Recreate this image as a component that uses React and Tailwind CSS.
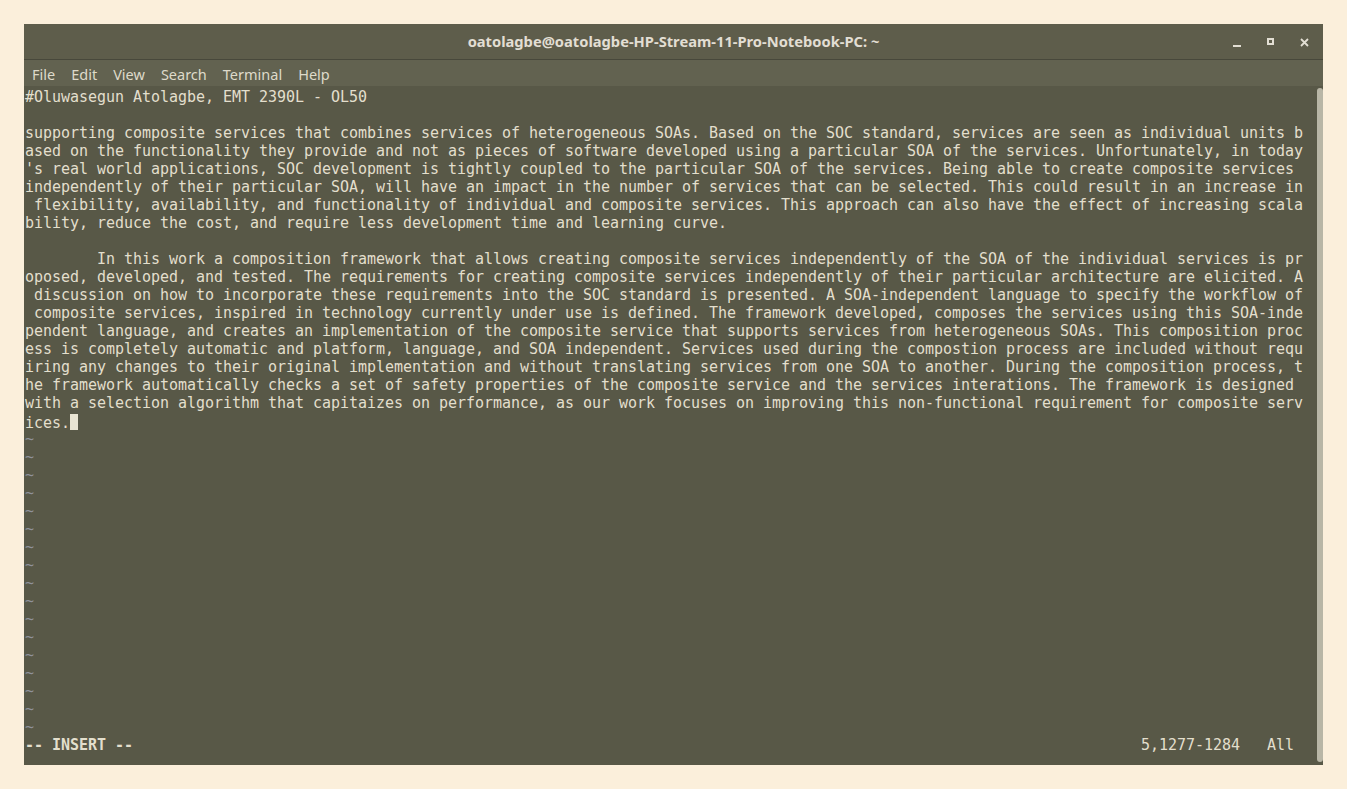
import React from "react";

const para1 = [
  "supporting composite services that combines services of heterogeneous SOAs. Based on the SOC standard, services are seen as individual units b",
  "ased on the functionality they provide and not as pieces of software developed using a particular SOA of the services. Unfortunately, in today",
  "'s real world applications, SOC development is tightly coupled to the particular SOA of the services. Being able to create composite services ",
  "independently of their particular SOA, will have an impact in the number of services that can be selected. This could result in an increase in",
  " flexibility, availability, and functionality of individual and composite services. This approach can also have the effect of increasing scala",
  "bility, reduce the cost, and require less development time and learning curve.",
];

const para2 = [
  "        In this work a composition framework that allows creating composite services independently of the SOA of the individual services is pr",
  "oposed, developed, and tested. The requirements for creating composite services independently of their particular architecture are elicited. A",
  " discussion on how to incorporate these requirements into the SOC standard is presented. A SOA-independent language to specify the workflow of",
  " composite services, inspired in technology currently under use is defined. The framework developed, composes the services using this SOA-inde",
  "pendent language, and creates an implementation of the composite service that supports services from heterogeneous SOAs. This composition proc",
  "ess is completely automatic and platform, language, and SOA independent. Services used during the compostion process are included without requ",
  "iring any changes to their original implementation and without translating services from one SOA to another. During the composition process, t",
  "he framework automatically checks a set of safety properties of the composite service and the services interations. The framework is designed ",
  "with a selection algorithm that capitaizes on performance, as our work focuses on improving this non-functional requirement for composite serv",
];

const tildes = Array.from({ length: 17 });

function Row({ children, className = "" }) {
  return <div className={`h-[18px] leading-[18px] whitespace-pre ${className}`}>{children}</div>;
}

export default function App() {
  return (
    <div className="min-h-screen w-full bg-[#fbefdb] pt-[24px] pl-[24px]">
      <div className="flex h-[741px] w-[1299px] flex-col bg-[#585847]">
        {/* title bar */}
        <div className="relative flex h-[36px] items-center justify-center border-b border-[#48483b] bg-[#5e5d4b]">
          <span className="font-['Noto_Sans',sans-serif] text-[14.7px] font-bold text-[#e2ded3]">
            oatolagbe@oatolagbe-HP-Stream-11-Pro-Notebook-PC: ~
          </span>
          <div className="absolute right-[14px] top-0 flex h-full items-center gap-[26px]">
            <div className="mt-[8px] h-[2px] w-[8px] bg-[#e2ded3]" />
            <div className="flex h-[7px] w-[7px] items-center justify-center bg-[#e2ded3]">
              <div className="h-[3px] w-[3px] bg-[#5e5d4b]" />
            </div>
            <svg width="9" height="9" viewBox="0 0 9 9" className="mt-[1px]">
              <path d="M1 1L8 8M8 1L1 8" stroke="#e2ded3" strokeWidth="1.8" />
            </svg>
          </div>
        </div>

        {/* menu bar */}
        <div className="flex h-[26px] items-center gap-[16px] bg-[#626250] pl-[8px] pt-[3px] font-['Noto_Sans',sans-serif] text-[14.5px] text-[#dedaca]">
          <span>File</span>
          <span>Edit</span>
          <span>View</span>
          <span>Search</span>
          <span>Terminal</span>
          <span>Help</span>
        </div>

        {/* terminal */}
        <div className="flex flex-1 pl-[1px] pt-[2px]">
          <div className="w-[1288px] font-['DejaVu_Sans_Mono',monospace] text-[15px] tracking-[-0.03px] text-[#e3dfcd]">
            <Row>#Oluwasegun Atolagbe, EMT 2390L - OL50</Row>
            <Row> </Row>
            {para1.map((l, i) => (
              <Row key={`a${i}`}>{l}</Row>
            ))}
            <Row> </Row>
            {para2.map((l, i) => (
              <Row key={`b${i}`}>{l}</Row>
            ))}
            <Row>
              ices.
              <span className="inline-block h-[16px] w-[8px] translate-y-[2px] bg-[#e8e4d2] align-baseline" />
            </Row>
            {tildes.map((_, i) => (
              <Row key={`t${i}`} className="text-[#8f929a]">~</Row>
            ))}
            <Row>
              <span className="font-bold">-- INSERT --</span>
              {"                                                                                                                "}
              5,1277-1284   All
            </Row>
          </div>
          <div className="ml-[10px] h-[674px] w-[6px] rounded-full bg-[#b8b6a6]" />
        </div>
      </div>
    </div>
  );
}
